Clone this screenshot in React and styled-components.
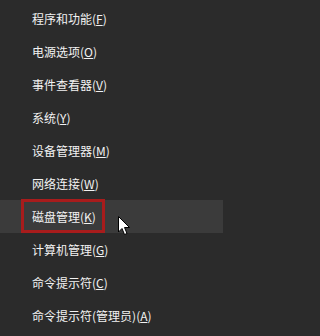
import React from "react";
import styled, { createGlobalStyle } from "styled-components";

const GlobalStyle = createGlobalStyle`
  html, body {
    margin: 0;
    padding: 0;
    background: #2b2b2b;
  }
`;

const Menu = styled.ul`
  position: relative;
  list-style: none;
  margin: 0;
  padding: 2px 0 0 0;
  width: 223px;
  height: 336px;
  box-sizing: border-box;
  background: #2b2b2b;
  font-family: "Noto Sans CJK SC", "Microsoft YaHei", sans-serif;
  font-size: 12px;
  color: #f2f2f2;
  overflow: hidden;
`;

const Item = styled.li`
  position: relative;
  display: flex;
  align-items: center;
  height: 33px;
  padding-left: 32px;
  background: ${(p) => (p.$active ? "#3b3b3b" : "transparent")};
  white-space: nowrap;
`;

const Key = styled.u`
  text-decoration: underline;
  text-underline-offset: 1px;
`;

const Mark = styled.span`
  position: absolute;
  left: 21px;
  top: -1px;
  width: 84px;
  height: 34px;
  box-sizing: border-box;
  border: 3px solid #a81c1c;
  pointer-events: none;
`;

const Cursor = styled.svg`
  position: absolute;
  left: 118px;
  top: 216px;
`;

const items = [
  ["程序和功能", "F"],
  ["电源选项", "O"],
  ["事件查看器", "V"],
  ["系统", "Y"],
  ["设备管理器", "M"],
  ["网络连接", "W"],
  ["磁盘管理", "K"],
  ["计算机管理", "G"],
  ["命令提示符", "C"],
  ["命令提示符(管理员)", "A"],
];

export default function App() {
  return (
    <>
      <GlobalStyle />
      <Menu>
        {items.map(([label, key], i) => (
          <Item key={i} $active={i === 6}>
            {label}(<Key>{key}</Key>)
            {i === 6 && <Mark />}
          </Item>
        ))}
        <Cursor width="13" height="20" viewBox="0 0 13 20">
          <path
            d="M0.5 0.5 L0.5 16 L4 12.5 L6.5 18.5 L9 17.5 L6.5 11.5 L11.5 11.5 Z"
            fill="#ffffff"
            stroke="#000000"
            strokeWidth="1"
            strokeLinejoin="miter"
          />
        </Cursor>
      </Menu>
    </>
  );
}
